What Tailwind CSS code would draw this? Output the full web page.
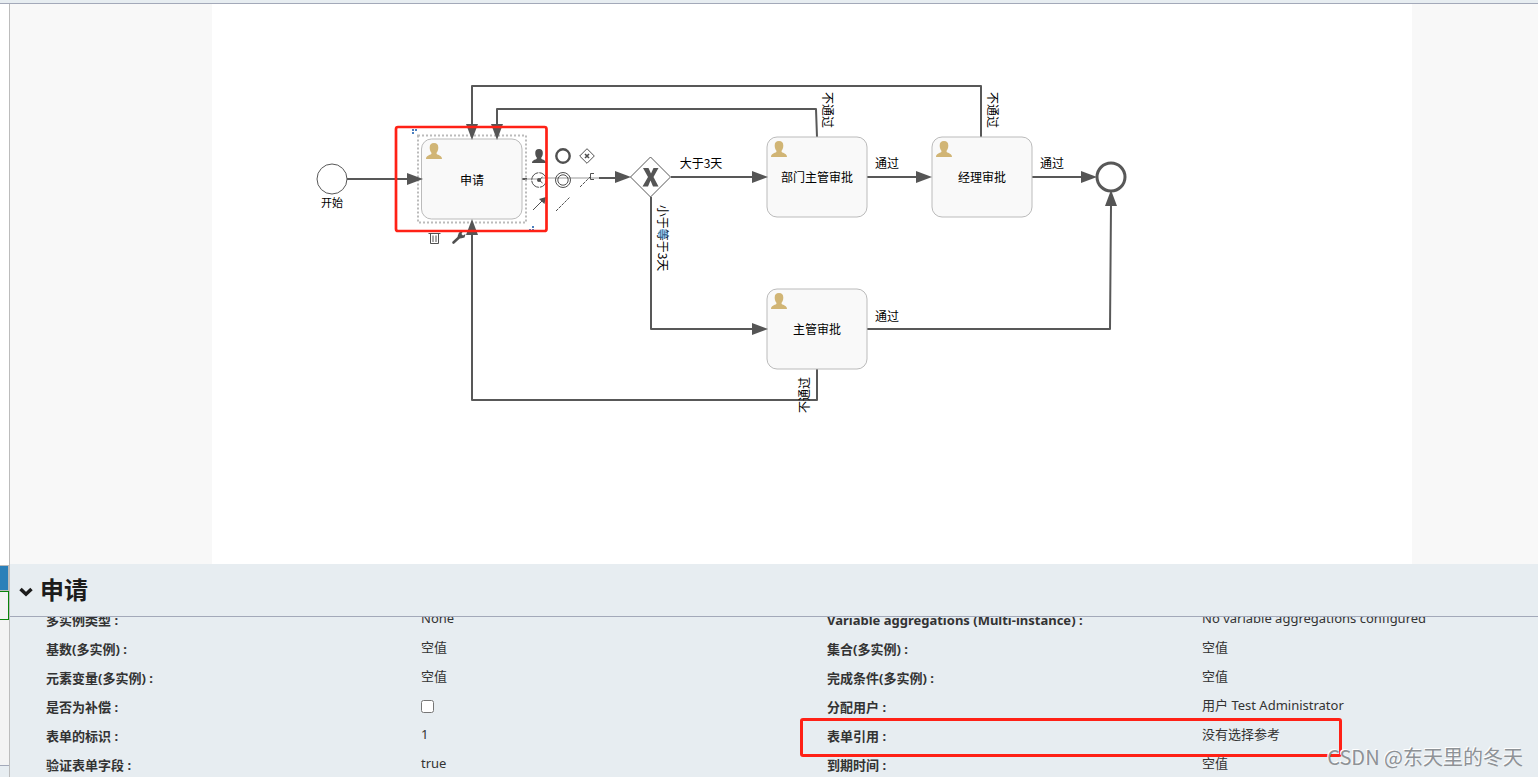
<!DOCTYPE html>
<html lang="zh-CN">
<head>
<meta charset="utf-8">
<title>申请</title>
<script src="https://cdn.jsdelivr.net/npm/@tailwindcss/browser@4"></script>
</head>
<body class="relative flex h-screen flex-col overflow-hidden bg-white font-['Noto_Sans','Noto_Sans_CJK_SC',sans-serif] text-[13px] text-[#333]">
<div class="h-1 shrink-0 border-b border-[#a3a9b9] bg-[#e7edf1]"></div>
<div class="flex min-h-0 flex-1">
  <aside class="flex w-[10px] shrink-0 flex-col border-r border-[#bcbcbc]">
    <div class="flex-1"></div>
    <div class="flex h-[212px] flex-col bg-[#f3f3f3]">
      <div class="h-[26px] border-y border-r border-[#bbb] bg-[#2b80b9]"></div>
      <div class="h-[29px] border-y border-r border-[#0a850a]"></div>
      <div class="flex-1"></div>
      <div class="h-3 border-t border-[#a3a9b9] bg-[#e7edf1]"></div>
    </div>
  </aside>
  <main class="flex min-w-0 flex-1 flex-col">
    <div class="flex min-h-0 flex-1 justify-center overflow-hidden bg-[#f8f8f8] pr-[50px] pl-[126px]">
      <svg class="h-[560px] w-[1200px] shrink-0 bg-white font-['Noto_Sans_CJK_SC',sans-serif] text-[12px]" viewBox="212 4 1200 560" fill="none">
        <defs>
          <path id="arrow" d="M0 0L-16 -6V6Z" fill="#555"/>
          <path id="person" d="M8 0C11 0 12.300 1.700 12.300 4.500C12.300 6.800 11.600 8.600 10.600 9.700V11C12.500 12.300 16 12.500 16 16H0C0 12.500 3.500 12.300 5.400 11V9.700C4.400 8.600 3.700 6.800 3.700 4.500C3.700 1.700 5 0 8 0Z"/>
        </defs>
        <g stroke="#585858" stroke-width="2" stroke-linejoin="round">
          <path d="M541 178H599" stroke="#ccc"/>
          <path d="M347 179H410M522 179H527M599 178H618M671 177H755M651 197V329H755M867 177H920M1032 177H1085M867 329H1110L1111 205M981 137V86H472V126M817 137L816 109H497V126M817 369V400H472V232"/>
          <path d="M527 179H541" stroke="#ccc"/>
        </g>
        <g fill="#f9f9f9" stroke="#bbb">
          <rect x="421.500" y="139" width="100.500" height="80" rx="10"/>
          <rect x="767" y="137" width="100" height="80" rx="10"/>
          <rect x="932" y="137" width="100" height="80" rx="10"/>
          <rect x="767" y="289" width="100" height="80" rx="10"/>
        </g>
        <rect x="418" y="135.500" width="108" height="87" stroke="#bbb" stroke-width="2" stroke-dasharray="2 2"/>
        <circle cx="332" cy="179" r="15" fill="#fff" stroke="#585858"/>
        <circle cx="1111" cy="177" r="14" fill="#fff" stroke="#585858" stroke-width="3"/>
        <path d="M650.500 157L670.500 177L650.500 197L630.500 177Z" fill="#fff" stroke="#585858"/>
        <path d="M643 168H648.500L651 173.500L653.500 168H658.500L653.500 177L658.500 186.500H653L650.500 180.500L648 186.500H642.500L648 177Z" fill="#555"/>
        <use href="#arrow" x="423" y="179"/>
        <use href="#arrow" x="631" y="177"/>
        <use href="#arrow" x="768" y="177"/>
        <use href="#arrow" x="768" y="329"/>
        <use href="#arrow" x="932" y="177"/>
        <use href="#arrow" x="1097" y="177"/>
        <use href="#arrow" transform="translate(472 140) rotate(90)"/>
        <use href="#arrow" transform="translate(497 140) rotate(90)"/>
        <use href="#arrow" transform="translate(472 219) rotate(-90)"/>
        <use href="#arrow" transform="translate(1111 190) rotate(-90)"/>
        <g fill="#d1b575">
          <use href="#person" x="426" y="143"/>
          <use href="#person" x="771" y="141"/>
          <use href="#person" x="936" y="141"/>
          <use href="#person" x="771" y="293"/>
        </g>
        <g fill="#000" text-anchor="middle">
          <text x="332" y="207" font-size="11">开始</text>
          <text x="472" y="185">申请</text>
          <text x="817" y="182">部门主管审批</text>
          <text x="982" y="182">经理审批</text>
          <text x="817" y="334">主管审批</text>
          <text x="701" y="168">大于3天</text>
          <text x="887" y="168">通过</text>
          <text x="1052" y="168">通过</text>
          <text x="887" y="321">通过</text>
          <text transform="translate(823 110) rotate(90)">不通过</text>
          <text transform="translate(988 110) rotate(90)">不通过</text>
          <text transform="translate(658 238) rotate(90)">小于等于3天</text>
          <text transform="translate(809 395) rotate(-90)">不通过</text>
        </g>
        <circle cx="663" cy="234" r="5" fill="#56a8ee" fill-opacity=".55"/>
        <path fill="#4a7fc0" d="M412 129h2v2h-2zM415 129h2v2h-2zM412 132h2v2h-2zM532 226h2v2h-2zM529 229h2v2h-2zM532 229h2v2h-2z"/>
        <g stroke="#505050">
          <g transform="translate(532 149) scale(.88)" stroke="none" fill="#505050"><use href="#person"/></g>
          <circle cx="563" cy="156" r="6.700" stroke-width="2.400"/>
          <path d="M587 148.700L594.300 156L587 163.300L579.700 156Z"/>
          <path d="M585 154L589 158M589 154L585 158" stroke-width="1.600"/>
          <circle cx="539" cy="180" r="7.300" stroke-dasharray="10.500 1"/>
          <path d="M542.500 177L539 180L542.500 183"/>
          <circle cx="539" cy="180" r="2" fill="#505050" stroke="none"/>
          <circle cx="563" cy="180" r="7.500"/>
          <circle cx="563" cy="180" r="5.200"/>
          <path d="M580 187L590 177" stroke-dasharray="3 1"/>
          <path d="M594 173.500H590.500V179.500H594"/>
          <path d="M533 210L542 201"/>
          <path d="M546 197L544.500 204L539 199Z" fill="#505050" stroke="none"/>
          <path d="M556 211L570 197" stroke-dasharray="3 1"/>
          <path d="M428.500 233.500H440.500M430.500 233.500V243.500H438.500V233.500M433 235.500V242M436 235.500V242M432 231.500H437"/>
          <path d="M453.500 242.500L460 236.500" stroke-width="2.600" stroke-linecap="round"/>
          <path d="M457.500 236.500L459 232.500L463 231L461.500 234L463 235.500L465.500 234L464.500 237.500L460.500 238.500Z" fill="#505050" stroke="none"/>
        </g>
        <rect x="396" y="127" width="150.500" height="104" rx="2" stroke="#ff2116" stroke-width="2.700"/>
      </svg>
    </div>
    <section class="h-[213px] shrink-0 bg-[#e7edf1]">
      <h2 class="flex h-[53px] items-center border-b border-[#a3a9b9] pl-[9px]">
        <button type="button" class="flex items-center gap-[7px] text-2xl font-bold text-[#1c1c1c]">
          <svg class="mt-1 h-[10px] w-[14px]" viewBox="0 0 14 10" fill="none" stroke="#1c1c1c" stroke-width="3.500"><path d="M1.500 2L7 7.200L12.500 2"/></svg>
          <span>申请</span>
        </button>
      </h2>
      <div class="h-[160px] overflow-hidden">
        <div class="-mt-[11px] grid grid-cols-2 leading-[29px]">
          <dl class="grid grid-cols-[375px_1fr] pl-[36px] [&>dd]:-mt-0.5 [&>dd]:h-[29px] [&>dt]:h-[29px] [&>dt]:font-bold">
            <dt>多实例类型 :</dt><dd>None</dd>
            <dt>基数(多实例) :</dt><dd>空值</dd>
            <dt>元素变量(多实例) :</dt><dd>空值</dd>
            <dt><label for="compensation">是否为补偿 :</label></dt><dd class="flex items-center"><input id="compensation" type="checkbox" class="mt-0.5 size-[13px]"></dd>
            <dt>表单的标识 :</dt><dd>1</dd>
            <dt>验证表单字段 :</dt><dd>true</dd>
          </dl>
          <dl class="grid grid-cols-[375px_1fr] pl-[53px] [&>dd]:-mt-0.5 [&>dd]:h-[29px] [&>dt]:h-[29px] [&>dt]:font-bold">
            <dt>Variable aggregations (Multi-instance) :</dt><dd>No variable aggregations configured</dd>
            <dt>集合(多实例) :</dt><dd>空值</dd>
            <dt>完成条件(多实例) :</dt><dd>空值</dd>
            <dt>分配用户 :</dt><dd>用户 Test Administrator</dd>
            <dt>表单引用 :</dt><dd>没有选择参考</dd>
            <dt>到期时间 :</dt><dd>空值</dd>
          </dl>
        </div>
      </div>
    </section>
  </main>
</div>
<div class="pointer-events-none absolute right-[196px] bottom-5 h-[39px] w-[542px] rounded-[3px] border-3 border-[#ff2116]"></div>
<p class="pointer-events-none absolute right-[15px] bottom-1 font-['Noto_Sans_CJK_SC',sans-serif] text-xl leading-8 text-[#8e9296] [text-shadow:-1px_-1px_0_#fff]">CSDN @东天里的冬天</p>
</body>
</html>
